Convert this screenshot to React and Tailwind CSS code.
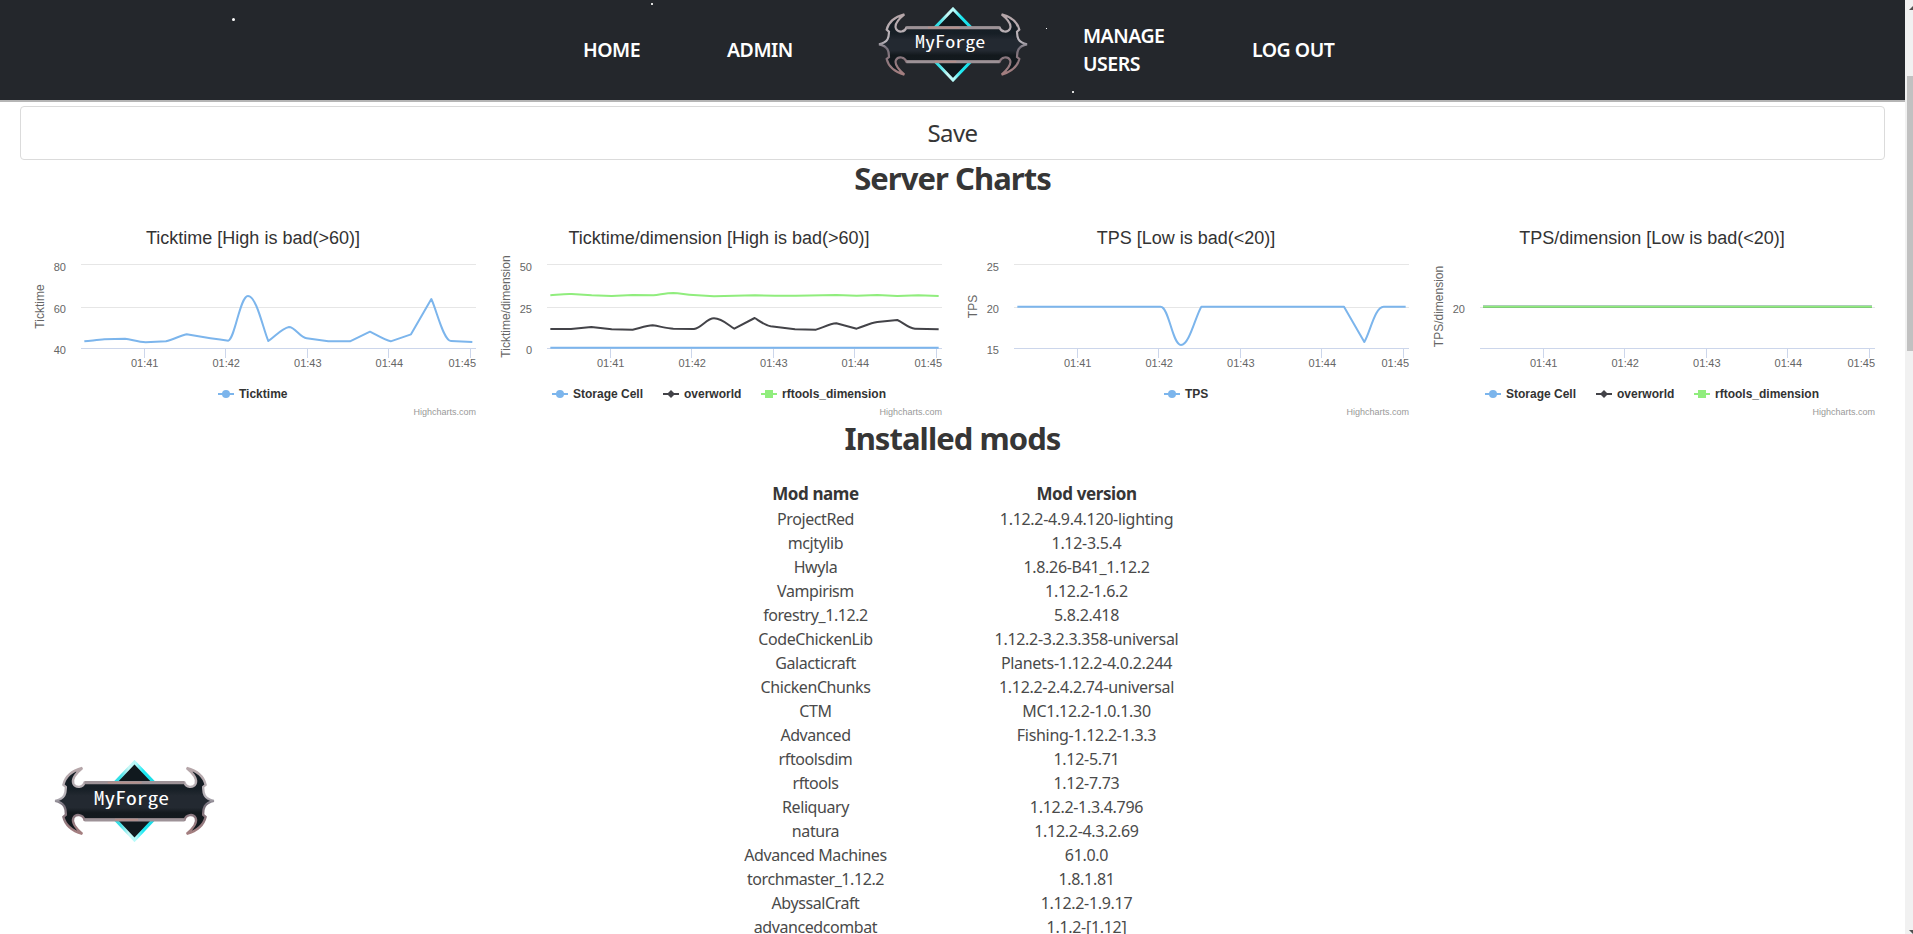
const MODS = [
  ["ProjectRed", "1.12.2-4.9.4.120-lighting"],
  ["mcjtylib", "1.12-3.5.4"],
  ["Hwyla", "1.8.26-B41_1.12.2"],
  ["Vampirism", "1.12.2-1.6.2"],
  ["forestry_1.12.2", "5.8.2.418"],
  ["CodeChickenLib", "1.12.2-3.2.3.358-universal"],
  ["Galacticraft", "Planets-1.12.2-4.0.2.244"],
  ["ChickenChunks", "1.12.2-2.4.2.74-universal"],
  ["CTM", "MC1.12.2-1.0.1.30"],
  ["Advanced", "Fishing-1.12.2-1.3.3"],
  ["rftoolsdim", "1.12-5.71"],
  ["rftools", "1.12-7.73"],
  ["Reliquary", "1.12.2-1.3.4.796"],
  ["natura", "1.12.2-4.3.2.69"],
  ["Advanced Machines", "61.0.0"],
  ["torchmaster_1.12.2", "1.8.1.81"],
  ["AbyssalCraft", "1.12.2-1.9.17"],
  ["advancedcombat", "1.1.2-[1.12]"],
];

const BLUE = "#7cb5ec";
const DARK = "#434348";
const GREEN = "#90ed7d";

const DIMENSIONS = [
  { name: "Storage Cell", color: BLUE, marker: "circle", x: 66 },
  { name: "overworld", color: DARK, marker: "diamond", x: 177 },
  { name: "rftools_dimension", color: GREEN, marker: "square", x: 275 },
];

// Series paths are drawn in a space three times finer than the chart's own.
const CHARTS = [
  {
    title: "Ticktime [High is bad(>60)]",
    axis: "Ticktime",
    ticks: ["80", "60", "40"],
    legend: [{ name: "Ticktime", color: BLUE, marker: "circle", x: 198 }],
    shift: 0,
    series: [
      [BLUE, "M193 394C215 392 235 389 253 388L315 386C335 389 355 395 377 397L438 394C460 388 480 378 500 373C540 380 580 387 625 392C645 385 660 258 684 258C710 258 730 360 745 393C765 380 785 355 807 351C825 351 840 382 860 385L925 394L990 394L1050 365C1070 375 1095 391 1112 394L1173 373L1234 267C1250 300 1270 392 1293 393L1357 396"],
    ],
  },
  {
    title: "Ticktime/dimension [High is bad(>60)]",
    axis: "Ticktime/dimension",
    ticks: ["50", "25", "0"],
    legend: DIMENSIONS,
    shift: 4,
    series: [
      [BLUE, "M181 413H1346"],
      [DARK, "M181 357L243 357L304 351L365 358L428 359C450 354 470 347 488 346C510 349 530 355 550 356L612 357C635 354 650 325 672 325C695 325 715 345 733 356L794 324C810 334 825 346 842 349L915 358L978 359C1000 352 1020 341 1039 340L1100 356C1120 350 1140 339 1162 336L1222 330C1240 338 1255 355 1275 356L1346 358"],
      [GREEN, "M181 256C205 254 225 251 245 252L305 256L365 258L428 255L490 256C510 254 530 249 550 249C570 250 590 254 610 255L672 259L795 256L855 257L917 257L1039 255L1100 257L1162 255L1222 258L1285 256L1346 258"],
    ],
  },
  {
    title: "TPS [Low is bad(<20)]",
    axis: "TPS",
    ticks: ["25", "20", "15"],
    legend: [{ name: "TPS", color: BLUE, marker: "circle", x: 211 }],
    shift: 2,
    series: [
      [BLUE, "M187 290H617C642 290 652 405 678 405C703 405 721 320 739 290H1167L1228 396C1246 365 1260 290 1286 290H1352"],
    ],
  },
  {
    title: "TPS/dimension [Low is bad(<20)]",
    axis: "TPS/dimension",
    ticks: [null, "20", null],
    legend: DIMENSIONS,
    shift: 1,
    series: [
      [BLUE, "M189 290H1356"],
      [DARK, "M189 290H1356"],
      [GREEN, "M189 290H1356"],
    ],
  },
];

const TIMES = [
  ["01:41", 124.7],
  ["01:42", 206.2],
  ["01:43", 287.8],
  ["01:44", 369.3],
];

function Marker({ kind, cx, color }) {
  if (kind === "circle") return <circle cx={cx} cy="175" r="4" fill={color} />;
  if (kind === "square") return <rect x={cx - 4} y="171" width="8" height="8" fill={color} />;
  return <path d={`M${cx} 171l4 4l-4 4l-4 -4z`} fill={color} />;
}

function Chart({ title, axis, ticks, legend, series, shift }) {
  const rows = [
    [45.5, 51.5],
    [88.5, 93.5],
    [129.5, 134.5],
  ];
  return (
    <svg
      width="466"
      height="200"
      viewBox="0 0 466 200"
      className="block overflow-visible font-['Liberation_Sans',sans-serif]"
    >
      <text x="233" y="25" textAnchor="middle" fontSize="18" fill="#333333">{title}</text>
      {rows.map(([y, base], i) => (
        <g key={y}>
          {i < 2 && ticks[i] && <path d={`M61 ${y}H456`} stroke="#e6e6e6" />}
          {ticks[i] && (
            <text x="46" y={base} textAnchor="end" fontSize="11" fill="#666666">{ticks[i]}</text>
          )}
        </g>
      ))}
      <path d="M61 129.5H456M124.5 129V139M205.5 129V139M287.5 129V139M368.5 129V139M450.5 129V139" stroke="#ccd6eb" fill="none" />
      <text x="24" y="87.5" textAnchor="middle" fontSize="12" fill="#666666" transform="rotate(-90 24 87.5)">{axis}</text>
      <g transform={`translate(${shift} -9) scale(0.33333)`} fill="none" strokeWidth="6" strokeLinejoin="round">
        {series.map(([color, d]) => (
          <path key={color} d={d} stroke={color} />
        ))}
      </g>
      {TIMES.map(([t, x]) => (
        <text key={t} x={x} y="148" textAnchor="middle" fontSize="11" fill="#666666">{t}</text>
      ))}
      <text x="456" y="148" textAnchor="end" fontSize="11" fill="#666666">01:45</text>
      {legend.map((l) => (
        <g key={l.name}>
          <path d={`M${l.x} 175h16`} stroke={l.color} strokeWidth="2" />
          <Marker kind={l.marker} cx={l.x + 8} color={l.color} />
          <text x={l.x + 21} y="179" fontSize="12" fontWeight="bold" fill="#333333">{l.name}</text>
        </g>
      ))}
      <text x="456" y="195.5" textAnchor="end" fontSize="9" fill="#999999">Highcharts.com</text>
    </svg>
  );
}

const FRAME =
  "M280 83H140C136 97 116 99 109 86C103 73 118 56 134 43C104 51 86 68 81 89L88 95C87 105 91 126 58 133C91 140 87 161 88 171L81 177C86 198 104 215 134 224C118 210 103 193 109 180C116 167 136 171 140 185H420C424 171 444 167 451 180C457 193 442 210 426 224C456 215 474 198 479 177L472 171C473 161 469 140 502 133C469 126 473 105 472 95L479 89C474 68 456 51 426 43C442 56 457 73 451 86C444 99 424 97 420 83Z";

function Logo({ className, id }) {
  return (
    <svg viewBox="52 21 456 225" preserveAspectRatio="none" className={className}>
      <defs>
        <linearGradient id={`${id}-gem`} x1="0" y1="0" x2="1" y2="0">
          <stop offset="0" stopColor="#1fdfe8" />
          <stop offset="0.3" stopColor="#35dfe6" />
          <stop offset="0.42" stopColor="#c8f7f5" />
          <stop offset="0.52" stopColor="#b5fbfb" />
          <stop offset="0.62" stopColor="#1de9f2" />
          <stop offset="1" stopColor="#12c3d2" />
        </linearGradient>
        <linearGradient id={`${id}-steel`} x1="0" y1="0" x2="0" y2="1">
          <stop offset="0" stopColor="#b5a5a8" />
          <stop offset="0.45" stopColor="#b9b5bb" />
          <stop offset="0.55" stopColor="#77717c" />
          <stop offset="1" stopColor="#a67f80" />
        </linearGradient>
        <linearGradient id={`${id}-plate`} x1="0" y1="0" x2="0" y2="1">
          <stop offset="0" stopColor="#131c23" />
          <stop offset="0.32" stopColor="#171f26" />
          <stop offset="0.42" stopColor="#232931" />
          <stop offset="0.6" stopColor="#232931" />
          <stop offset="0.68" stopColor="#13191d" />
          <stop offset="1" stopColor="#121a20" />
        </linearGradient>
      </defs>
      <path d="M280 27L383 133L280 240L177 133Z" fill="#10191e" stroke={`url(#${id}-gem)`} strokeWidth="9" />
      <path d={FRAME} fill={`url(#${id}-plate)`} stroke={`url(#${id}-steel)`} strokeWidth="6.5" strokeMiterlimit="3" />
      <path d="M140 83H420M140 185H420" strokeWidth="9" stroke="#9d9297" />
      <path d="M205 83H300M225 185H290" stroke="#b38f8b" strokeWidth="5" />
      <text x="166" y="144" fontSize="50" textLength="211" lengthAdjust="spacingAndGlyphs" fill="#ffffff" className="font-['Noto_Sans_Mono_CJK_SC','DejaVu_Sans_Mono',monospace] font-medium">MyForge</text>
    </svg>
  );
}

function NavItem({ children, className }) {
  return (
    <a className={`text-[19.5px]/7 font-semibold tracking-[-0.5px] text-white ${className}`}>{children}</a>
  );
}

function Heading({ children, className }) {
  return (
    <h1 className={`text-center text-[31px]/[36px] font-bold tracking-[-0.95px] text-[#363636] ${className}`}>
      {children}
    </h1>
  );
}

export default function App() {
  return (
    <div className="flex h-[934px] w-full overflow-hidden bg-white font-['Noto_Sans',sans-serif]">
      <main className="relative min-w-0 flex-1">
        <header className="relative flex h-[102px] items-center border-b-2 border-[#b5b5b5] bg-[#24272c] pl-[583px]">
          <NavItem className="w-[144px]">HOME</NavItem>
          <NavItem className="w-[150px]">ADMIN</NavItem>
          <Logo id="nav" className="mb-[11px] h-[75px] w-[152px]" />
          <NavItem className="ml-[54px] w-[90px]">MANAGE USERS</NavItem>
          <NavItem className="ml-[79px] whitespace-nowrap">LOG OUT</NavItem>
          <i className="absolute left-[232px] top-[18px] size-[3px] rounded-full bg-white" />
          <i className="absolute left-[651px] top-[3px] size-[2px] bg-[#dddddd]" />
          <i className="absolute left-[1046px] top-[28px] size-px bg-white" />
          <i className="absolute left-[1072px] top-[91px] size-[2px] bg-[#dddddd]" />
        </header>
        <div className="px-5 pt-1">
          <button className="block h-[54px] w-full rounded border border-[#dbdbdb] text-2xl tracking-[-0.6px] text-[#363636]">
            Save
          </button>
          <Heading className="h-[59px]">Server Charts</Heading>
          <div className="flex h-[201px]">
            {CHARTS.map((c, i) => (
              <div key={c.title} className={i === 1 ? "w-[467px]" : "w-[466px]"}>
                <Chart {...c} />
              </div>
            ))}
          </div>
          <Heading>Installed mods</Heading>
          <table className="ml-[660px] mt-[24px] table-fixed border-collapse text-center text-[#4a4a4a]">
            <thead>
              <tr className="h-[27px] text-[17px]/[27px] tracking-[-0.4px] text-[#363636]">
                <th className="w-[271px] p-0 font-bold">Mod name</th>
                <th className="w-[271px] p-0 font-bold">Mod version</th>
              </tr>
            </thead>
            <tbody>
              {MODS.map(([name, version]) => (
                <tr key={name} className="h-6 text-base/6">
                  <td className="p-0 tracking-[-0.42px]">{name}</td>
                  <td className="p-0 tracking-[-0.3px]">{version}</td>
                </tr>
              ))}
            </tbody>
          </table>
        </div>
        <Logo id="float" className="absolute left-[53px] top-[760px] h-[82px] w-[163px]" />
      </main>
      <aside className="flex w-2 shrink-0 flex-col overflow-hidden bg-[#f1f1f1]">
        <svg viewBox="0 0 8 76" className="h-[76px] w-2 shrink-0">
          <path d="M4 10L8 6V10Z" fill="#505050" />
        </svg>
        <div className="ml-[2px] h-[275px] w-[6px] shrink-0 bg-[#c1c1c1]" />
        <svg viewBox="0 0 8 4" className="mt-auto h-1 w-2 shrink-0">
          <path d="M4 0H8V4Z" fill="#505050" />
        </svg>
      </aside>
    </div>
  );
}
